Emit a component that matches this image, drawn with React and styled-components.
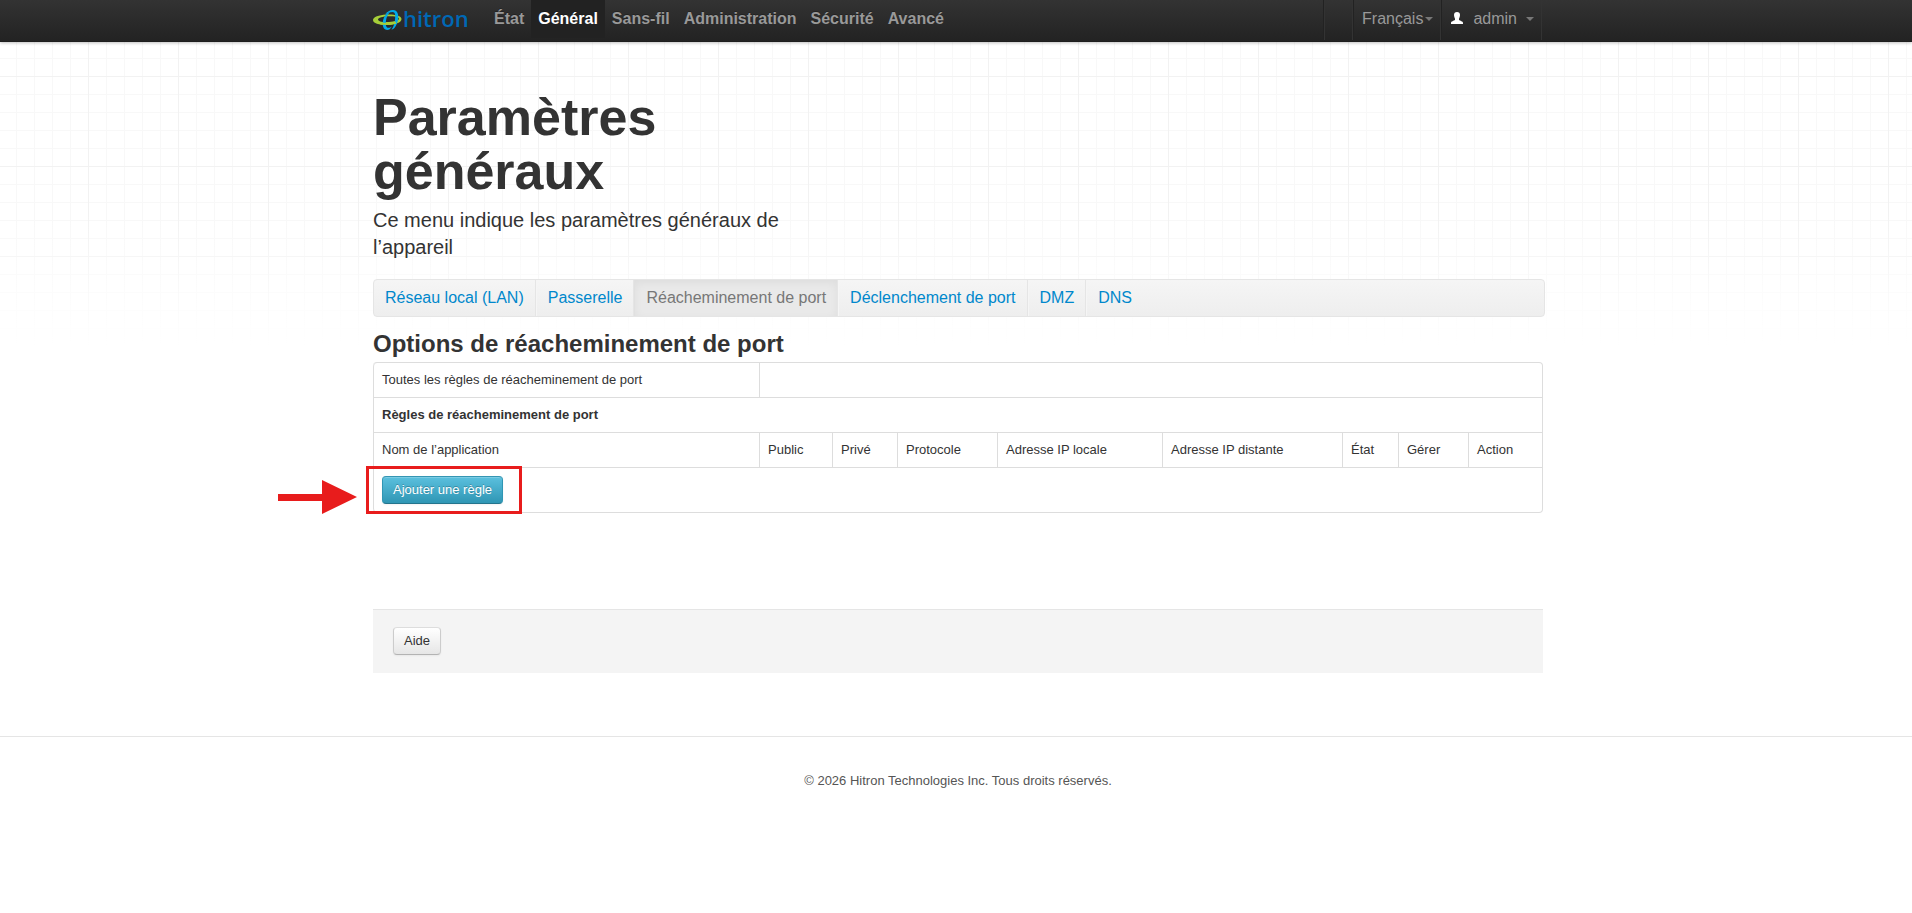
import React from "react";
import styled, { createGlobalStyle } from "styled-components";

const GlobalStyle = createGlobalStyle`
  * {
    box-sizing: border-box;
  }

  body {
    margin: 0;
    color: #333;
    background-color: #fff;
    font-family: "Liberation Sans", Arial, sans-serif;
    font-size: 13px;
    line-height: 18px;
  }

  button {
    font-family: inherit;
  }
`;

const Navbar = styled.header`
  position: relative;
  height: 42px;
  padding-left: 4px;
  background: linear-gradient(#333, #222);
  box-shadow: 0 1px 3px rgba(0, 0, 0, 0.25), inset 0 -1px 0 rgba(0, 0, 0, 0.1);
`;

const Container = styled.div`
  max-width: 1170px;
  margin: 0 auto;
`;

const NavInner = styled(Container)`
  display: flex;
  height: 40px;
`;

const Brand = styled.a`
  display: flex;
  align-items: center;
  width: 114px;
`;

const NavList = styled.nav`
  display: flex;
`;

const NavLink = styled.a`
  height: 38px;
  padding: 10px 7px;
  color: ${({ $active }) => ($active ? "#fff" : "#999")};
  background-color: ${({ $active }) => ($active ? "#222" : "transparent")};
  font-size: 16px;
  font-weight: 700;
  text-decoration: none;
  text-shadow: 0 -1px 0 rgba(0, 0, 0, 0.25);
`;

const NavRight = styled.div`
  display: flex;
  margin-right: 1px;
  margin-left: auto;
  border-left: 1px solid #222;
  border-right: 1px solid #333;
`;

const NavGap = styled.div`
  width: 28px;
  border-left: 1px solid #333;
`;

const NavMenu = styled.button`
  display: flex;
  align-items: center;
  gap: ${({ $gap }) => $gap}px;
  padding: 0 7px 2px 9px;
  border: 0;
  border-left: 1px solid #333;
  color: #999;
  background: none;
  box-shadow: inset 1px 0 0 #222;
  font-size: 16px;
  line-height: 18px;
`;

const Caret = styled.span`
  border: 4px solid transparent;
  border-top-color: #777;
  border-bottom: 0;
`;

const Page = styled.div`
  padding-left: 4px;
  background-image: linear-gradient(rgba(255, 255, 255, 0) 170px, #fff 304px),
    linear-gradient(90deg, #f2f2f2 1px, transparent 1px),
    linear-gradient(#f2f2f2 1px, transparent 1px),
    linear-gradient(90deg, #f8f8f8 1px, transparent 1px),
    linear-gradient(#f8f8f8 1px, transparent 1px);
  background-size: auto, 90px 90px, 90px 90px, 18px 18px, 18px 18px;
  background-position: 0 0, 88px 0, 0 34px, 16px 0, 0 16px;
`;

const Intro = styled.div`
  max-width: 470px;
  padding-top: 48px;
`;

const Title = styled.h1`
  margin: 0;
  font-size: 52px;
  line-height: 54px;
`;

const Lead = styled.p`
  margin: 9px 0 18px;
  font-size: 20px;
  line-height: 27px;
`;

const SubNav = styled.nav`
  display: flex;
  height: 38px;
  margin-right: -2px;
  border: 1px solid #e5e5e5;
  border-radius: 4px;
  background: linear-gradient(#f5f5f5, #eee);
`;

const SubLink = styled.a`
  padding: 9px 11px;
  border-right: 1px solid #e5e5e5;
  border-left: 1px solid ${({ $active }) => ($active ? "#e0e0e0" : "#f5f5f5")};
  color: ${({ $active }) => ($active ? "#777" : "#08c")};
  background-color: ${({ $active }) => ($active ? "#e9e9e9" : "transparent")};
  box-shadow: ${({ $active }) =>
    $active ? "inset 0 3px 8px rgba(0, 0, 0, 0.05)" : "none"};
  font-size: 16px;
  text-decoration: none;

  &:first-child {
    border-left: 0;
  }

  &:last-child {
    border-right: 0;
  }
`;

const SectionTitle = styled.h2`
  margin: 9px 0 0;
  font-size: 24px;
  line-height: 36px;
`;

const RulesWrap = styled.div`
  position: relative;
  margin-right: 1px;
`;

const RulesTable = styled.table`
  width: 100%;
  table-layout: fixed;
  border: 1px solid #ddd;
  border-left: 0;
  border-radius: 4px;
  border-collapse: separate;
  border-spacing: 0;
`;

const Cell = styled.td`
  height: 35px;
  padding: 8px;
  border-left: 1px solid #ddd;
  border-top: 1px solid #ddd;
  font-weight: ${({ $bold }) => ($bold ? 700 : 400)};
  text-align: left;
  vertical-align: top;

  tr:first-child > & {
    height: 34px;
    border-top: 0;
  }

  tr:first-child > &:first-child {
    border-top-left-radius: 4px;
  }

  tr:last-child > & {
    border-bottom-left-radius: 4px;
  }
`;

const Button = styled.button`
  display: block;
  height: 28px;
  padding: 4px 10px;
  border: 1px solid;
  border-color: #ddd #ccc #b3b3b3;
  border-radius: 4px;
  color: #333;
  background: linear-gradient(#fff, #e6e6e6);
  box-shadow: inset 0 1px 0 rgba(255, 255, 255, 0.2),
    0 1px 2px rgba(0, 0, 0, 0.05);
  font-size: 13px;
  line-height: 18px;
`;

const InfoButton = styled(Button)`
  border-color: #3595b3 #2f96b4 #24748c;
  color: #fff;
  background: linear-gradient(#5bc0de, #2f96b4);
  text-shadow: 0 -1px 0 rgba(0, 0, 0, 0.25);
`;

const Highlight = styled.div`
  position: absolute;
  left: -7px;
  bottom: -1px;
  width: 156px;
  height: 48px;
  border: 3px solid #e81c1c;
  pointer-events: none;
`;

const Arrow = styled.svg`
  position: absolute;
  right: calc(100% + 15px);
  bottom: -2px;
  width: 80px;
  height: 36px;
`;

const HelpBar = styled.div`
  margin-top: 96px;
  padding: 17px 20px 18px;
  border-top: 1px solid #e5e5e5;
  background-color: #f4f4f4;
`;

const Footer = styled.footer`
  margin-top: 63px;
  padding: 35px 0 36px 4px;
  border-top: 1px solid #e5e5e5;
  color: #555;
  text-align: center;
`;

const Copyright = styled.p`
  margin: 0;
`;

const menu = [
  "État",
  "Général",
  "Sans-fil",
  "Administration",
  "Sécurité",
  "Avancé",
];

const tabs = [
  "Réseau local (LAN)",
  "Passerelle",
  "Réacheminement de port",
  "Déclenchement de port",
  "DMZ",
  "DNS",
];

const columns = [
  { label: "Nom de l’application", width: 386 },
  { label: "Public", width: 73 },
  { label: "Privé", width: 65 },
  { label: "Protocole", width: 100 },
  { label: "Adresse IP locale", width: 165 },
  { label: "Adresse IP distante", width: 180 },
  { label: "État", width: 56 },
  { label: "Gérer", width: 70 },
  { label: "Action", width: 74 },
];

const Logo = () => (
  <svg width="104" height="38" viewBox="0 -4 104 38" role="img" aria-label="hitron">
    <path
      fill="#a6ce39"
      fillRule="evenodd"
      d="M0 15c0-3 6-5 13-5.500 8-.5 15.500 1 15.500 4.500S22 20 14 20C6 20 0 18.500 0 15zM5 14.500c0 1.800 4 2.800 9 2.600s12-1.200 12-3.300-6-2.800-11-2.600S5 12.700 5 14.500z"
    />
    <path
      fill="#00a9e8"
      d="M12 9.500C14 6.500 17 5 20 5c4.500 0 6 4.500 5 10-1 5-3.500 9-6.500 9.800 2-2.800 3-6 3.500-9.800.6-4.500.3-8-2.500-8-2.500 0-4.500.8-7.500 2.500z"
    />
    <path
      fill="#00a9e8"
      d="M17 7c-2 2-3.500 5-4 8.500-.5 4-.2 7.300 2.500 7.300 1.300 0 2.300-.5 3.300-1.300C17.500 24 16 25 14.500 25c-4 0-5.500-4-4.500-9.500C11 11 13.500 8 17 7z"
    />
    <path d="M7 18.300c5 .9 11 .7 16-.5" fill="none" stroke="#a6ce39" strokeWidth="2" />
    <text x="30" y="22" fill="#0068b5" fontFamily="Open Sans, sans-serif" fontSize="22" fontWeight="600">
      hitron
    </text>
  </svg>
);

const UserIcon = () => (
  <svg width="14" height="14" viewBox="0 0 14 14" fill="#fff">
    <path d="M7 0c2 0 3 1 3 3 0 2-1 3-1 4v1c1 1 4 1 4 3v1H1v-1c0-2 3-2 4-3V7C5 6 4 5 4 3c0-2 1-3 3-3z" />
  </svg>
);

const App = () => {
  return (
    <>
      <GlobalStyle />
      <Navbar>
        <NavInner>
          <Brand href="#">
            <Logo />
          </Brand>
          <NavList>
            {menu.map((item) => (
              <NavLink key={item} href="#" $active={item === "Général"}>
                {item}
              </NavLink>
            ))}
          </NavList>
          <NavRight>
            <NavGap />
            <NavMenu $gap={2}>
              Français
              <Caret />
            </NavMenu>
            <NavMenu $gap={9}>
              <UserIcon />
              admin
              <Caret />
            </NavMenu>
          </NavRight>
        </NavInner>
      </Navbar>
      <Page>
        <Container>
          <Intro>
            <Title>Paramètres généraux</Title>
            <Lead>Ce menu indique les paramètres généraux de l’appareil</Lead>
          </Intro>
          <SubNav>
            {tabs.map((tab) => (
              <SubLink
                key={tab}
                href="#"
                $active={tab === "Réacheminement de port"}
              >
                {tab}
              </SubLink>
            ))}
          </SubNav>
          <SectionTitle>Options de réacheminement de port</SectionTitle>
          <RulesWrap>
            <RulesTable>
              <colgroup>
                {columns.map(({ label, width }) => (
                  <col key={label} width={width} />
                ))}
              </colgroup>
              <tbody>
                <tr>
                  <Cell>Toutes les règles de réacheminement de port</Cell>
                  <Cell colSpan={8} />
                </tr>
                <tr>
                  <Cell as="th" colSpan={9} $bold>
                    Règles de réacheminement de port
                  </Cell>
                </tr>
                <tr>
                  {columns.map(({ label }) => (
                    <Cell as="th" key={label} scope="col">
                      {label}
                    </Cell>
                  ))}
                </tr>
                <tr>
                  <Cell colSpan={9}>
                    <InfoButton>Ajouter une règle</InfoButton>
                  </Cell>
                </tr>
              </tbody>
            </RulesTable>
            <Highlight />
            <Arrow viewBox="0 0 80 36" fill="#e81c1c">
              <path d="M0 15h44V1l35 17-35 17V22H0z" />
            </Arrow>
          </RulesWrap>
          <HelpBar>
            <Button>Aide</Button>
          </HelpBar>
        </Container>
      </Page>
      <Footer>
        <Copyright>
          © 2026 Hitron Technologies Inc. Tous droits réservés.
        </Copyright>
      </Footer>
    </>
  );
};

export default App;
